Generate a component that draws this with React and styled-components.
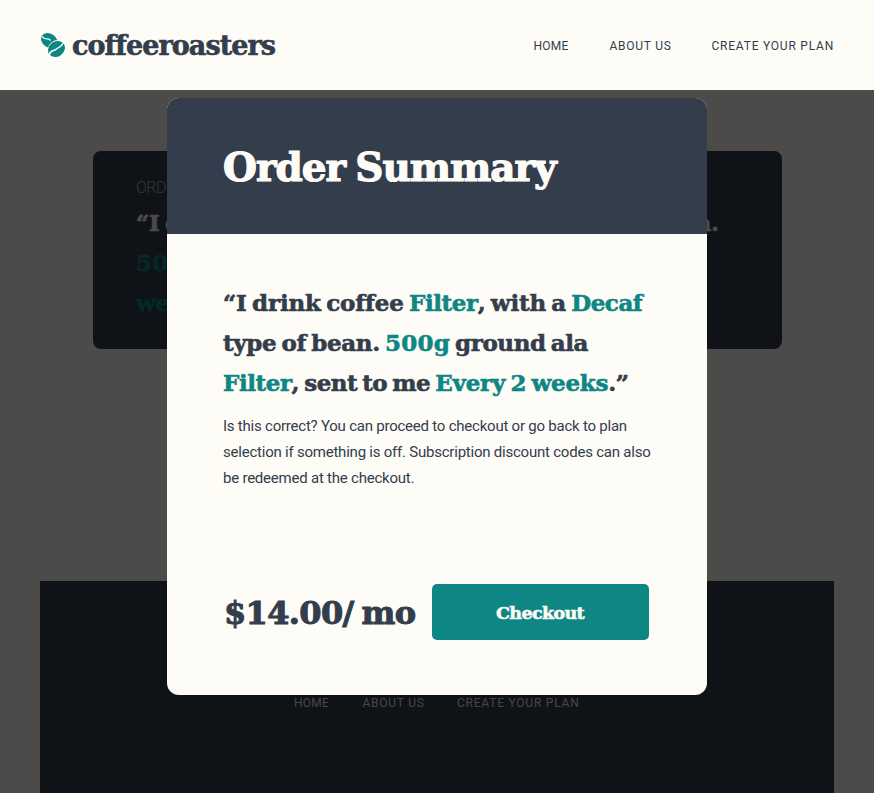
import React from 'react';
import styled, { createGlobalStyle, css } from 'styled-components';

const ink = '#333d4b';
const cream = '#fefcf7';
const teal = '#0e8784';

const GlobalStyle = createGlobalStyle`
  *, *::before, *::after { box-sizing: border-box; }
  html, body { margin: 0; height: 100%; overflow: hidden; }
  body { background: ${cream}; color: ${ink}; font-family: Roboto, sans-serif; }
  h1, p { margin: 0; }
`;

const display = css`
  font-family: 'DejaVu Serif', serif;
  font-weight: 700;
  -webkit-text-stroke: 0.6px currentColor;
  word-spacing: -2.5px;
  white-space: pre;
`;

const Page = styled.div`
  height: 793px;
  display: flex;
  flex-direction: column;
  overflow: hidden;
`;

const Header = styled.header`
  position: relative;
  z-index: 3;
  flex: none;
  height: 90px;
  padding: 2px 40px 0;
  display: flex;
  align-items: center;
  justify-content: space-between;
  background: ${cream};
`;

const Brand = styled.a`
  display: flex;
  align-items: center;
  gap: 7px;
`;

const BrandName = styled.span`
  ${display}
  font-size: 27px;
  line-height: 36px;
  letter-spacing: -0.93px;
`;

const Beans = styled.svg`
  display: block;
  width: 25px;
  height: 26px;
  margin-bottom: 2px;
`;

const Nav = styled.nav`
  display: flex;
  font-size: 12px;
  line-height: 16px;
`;

const NavLink = styled.a`
  width: ${(p) => p.$width}px;
  letter-spacing: ${(p) => p.$tracking}px;
  white-space: nowrap;
`;

const Main = styled.main`
  flex: none;
  height: 491px;
  padding: 61px 92px 0 93px;
`;

const SummaryCard = styled.section`
  height: 198px;
  padding: 24px 43px 0;
  border-radius: 8px;
  background: ${ink};
  color: ${cream};
`;

const SummaryLabel = styled.p`
  font-size: 16px;
  font-weight: 300;
  line-height: 26px;
  letter-spacing: -0.5px;
  color: #b0b0b0;
  margin-bottom: 2px;
`;

const Quote = styled.p`
  ${display}
  font-size: 23px;
  line-height: 40px;
`;

const Part = styled.span`
  letter-spacing: ${(p) => p.$tracking}px;
  color: ${(p) => (p.$accent ? teal : 'inherit')};
`;

const Footer = styled.footer`
  flex: none;
  height: 212px;
  margin: 0 40px;
  padding: 114px 0 0 254px;
  background: ${ink};
  color: #e8e8e8;
`;

const Backdrop = styled.div`
  position: fixed;
  inset: 0;
  z-index: 2;
  padding-top: 98px;
  display: flex;
  justify-content: center;
  align-items: flex-start;
  background: rgba(0, 0, 0, 0.7);
`;

const Modal = styled.div`
  width: 540px;
  height: 597px;
  display: flex;
  flex-direction: column;
  border-radius: 12px;
  background: ${cream};
`;

const ModalHeader = styled.div`
  height: 136px;
  padding: 1px 56px 0;
  display: flex;
  align-items: center;
  border-radius: 12px 12px 0 0;
  background: ${ink};
  color: ${cream};
`;

const ModalTitle = styled.h1`
  ${display}
  font-size: 39px;
  line-height: 48px;
  letter-spacing: -1px;
  -webkit-text-stroke-width: 1.2px;
`;

const ModalBody = styled.div`
  flex: 1;
  padding: 49px 56px 55px;
  display: flex;
  flex-direction: column;
`;

const Details = styled.p`
  margin-top: 10px;
  font-size: 15px;
  line-height: 26px;
  letter-spacing: -0.225px;
  white-space: nowrap;
`;

const CheckoutRow = styled.div`
  margin-top: auto;
  padding: 0 2px 0 1px;
  display: flex;
  align-items: center;
  justify-content: space-between;
`;

const Price = styled.span`
  ${display}
  padding-top: 1px;
  font-size: 32px;
  line-height: 40px;
  letter-spacing: -0.65px;
  -webkit-text-stroke-width: 1px;
`;

const CheckoutButton = styled.button`
  ${display}
  width: 217px;
  height: 56px;
  padding: 2px 1px 0 0;
  border: 0;
  border-radius: 5px;
  background: ${teal};
  color: ${cream};
  font-size: 17.5px;
  letter-spacing: -0.65px;
`;

function BeansIcon() {
  return (
    <Beans viewBox="0 0 25 26" aria-hidden="true">
      <g fill={teal}>
        <ellipse cx="9.4" cy="8.6" rx="9" ry="6.9" transform="rotate(35 9.4 8.6)" />
        <ellipse cx="16.5" cy="17" rx="9.8" ry="8.3" fill={cream} transform="rotate(-38 16.5 17)" />
        <ellipse cx="16.5" cy="17" rx="9" ry="7.5" transform="rotate(-38 16.5 17)" />
      </g>
      <g fill="none" stroke={cream} strokeWidth="1.4" strokeLinecap="round">
        <path d="M2 4.6C4.9 8.6 8.4 5.4 10.2 8.2" />
        <path d="M9.6 22.3C10.4 17.6 14.4 19.4 16.4 17S21 15.8 22.8 11.5" />
      </g>
    </Beans>
  );
}

const links = [
  { label: 'HOME', tracking: 0.25 },
  { label: 'ABOUT US', tracking: 0.75 },
  { label: 'CREATE YOUR PLAN', tracking: 0.78 },
];

function Navigation({ widths }) {
  return (
    <Nav>
      {links.map((link, i) => (
        <NavLink key={link.label} $tracking={link.tracking} $width={widths[i]}>
          {link.label}
        </NavLink>
      ))}
    </Nav>
  );
}

export default function App() {
  return (
    <Page>
      <GlobalStyle />
      <Header>
        <Brand>
          <BeansIcon />
          <BrandName>coffeeroasters</BrandName>
        </Brand>
        <Navigation widths={[76, 102, 122.5]} />
      </Header>

      <Main>
        <SummaryCard>
          <SummaryLabel>ORDER SUMMARY</SummaryLabel>
          <Quote>
            <Part $tracking={-0.15}>“I drink coffee </Part>
            <Part $tracking={-0.43} $accent>Filter</Part>
            <Part $tracking={-0.2}>, with a </Part>
            <Part $tracking={-0.48} $accent>Decaf</Part>
            <Part $tracking={-0.24}> type of bean.</Part>
            <br />
            <Part $tracking={0.2} $accent>500g</Part>
            <Part $tracking={-0.42}> ground ala </Part>
            <Part $tracking={-0.43} $accent>Filter</Part>
            <Part $tracking={-0.45}>, sent to me </Part>
            <Part $tracking={-0.23} $accent>Every 2</Part>
            <br />
            <Part $tracking={-0.23} $accent>weeks</Part>
            <Part $tracking={-0.6}>.”</Part>
          </Quote>
        </SummaryCard>
      </Main>

      <Footer>
        <Navigation widths={[68.5, 94.5, 123]} />
      </Footer>

      <Backdrop>
        <Modal role="dialog" aria-label="Order Summary">
          <ModalHeader>
            <ModalTitle>Order Summary</ModalTitle>
          </ModalHeader>
          <ModalBody>
            <Quote>
              <Part $tracking={-0.15}>“I drink coffee </Part>
              <Part $tracking={-0.43} $accent>Filter</Part>
              <Part $tracking={-0.2}>, with a </Part>
              <Part $tracking={-0.48} $accent>Decaf</Part>
              <br />
              <Part $tracking={-0.34}>type of bean. </Part>
              <Part $tracking={0.2} $accent>500g</Part>
              <Part $tracking={-0.42}> ground ala</Part>
              <br />
              <Part $tracking={-0.43} $accent>Filter</Part>
              <Part $tracking={-0.48}>, sent to me </Part>
              <Part $tracking={-0.23} $accent>Every 2 weeks</Part>
              <Part $tracking={-0.6}>.”</Part>
            </Quote>
            <Details>
              Is this correct? You can proceed to checkout or go back to plan
              <br />
              selection if something is off. Subscription discount codes can also
              <br />
              be redeemed at the checkout.
            </Details>
            <CheckoutRow>
              <Price>$14.00/ mo</Price>
              <CheckoutButton type="button">Checkout</CheckoutButton>
            </CheckoutRow>
          </ModalBody>
        </Modal>
      </Backdrop>
    </Page>
  );
}
